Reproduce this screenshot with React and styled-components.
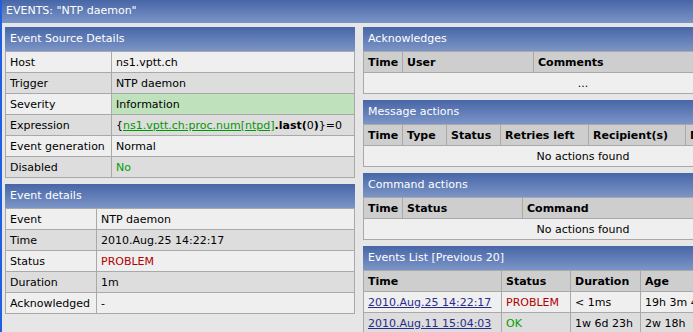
import React from "react";
import styled, { createGlobalStyle } from "styled-components";

const GlobalStyle = createGlobalStyle`
  html, body {
    margin: 0;
    padding: 0;
    overflow: hidden;
    background: #e6e6e6;
  }
  body {
    font-family: "DejaVu Sans", Verdana, sans-serif;
    font-size: 11px;
    color: #000;
  }
`;

const Page = styled.div`
  border-left: 2px solid #1f5fe0;
  min-height: 332px;
  width: 820px;
`;

const TopBar = styled.div`
  height: 23px;
  line-height: 22px;
  padding-left: 4px;
  color: #fff;
  background: linear-gradient(#4766a7, #7c95c7);
`;

const Columns = styled.div`
  display: flex;
  align-items: flex-start;
  gap: 8px;
  padding: 4px 0 0 3px;
`;

const Column = styled.div`
  display: flex;
  flex-direction: column;
  gap: 6px;
  width: ${(p) => p.$width}px;
  flex: none;
`;

const Panel = styled.div``;

const PanelTitle = styled.div`
  height: 24px;
  line-height: 23px;
  padding-left: 5px;
  color: #fff;
  background: linear-gradient(#4766a7, #7c95c7);
`;

const Table = styled.table`
  width: 100%;
  border-collapse: collapse;
  table-layout: fixed;
  border: 1px solid #a9a9a9;
  border-top: none;
`;

const Row = styled.tr`
  background: ${(p) => (p.$alt ? "#dddddd" : "#efefef")};
`;

const HeadRow = styled.tr`
  background: #cecece;
`;

const Th = styled.th`
  text-align: left;
  font-weight: bold;
  border: 1px solid #a9a9a9;
  height: 20px;
  padding: 0 4px;
  white-space: nowrap;
  overflow: hidden;
  ${(p) => p.$w && `width: ${p.$w}px;`}
`;

const Td = styled.td`
  border: 1px solid #a9a9a9;
  height: 20px;
  padding: 0 4px;
  white-space: nowrap;
  overflow: hidden;
  text-align: ${(p) => (p.$center ? "center" : "left")};
  ${(p) => p.$w && `width: ${p.$w}px;`}
  ${(p) => p.$bg && `background: ${p.$bg};`}
`;

const Green = styled.span`
  color: #00a000;
`;

const Red = styled.span`
  color: #b00000;
`;

const ExprLink = styled.a`
  color: #009900;
  text-decoration: underline;
`;

const DateLink = styled.a`
  color: #2a2a8a;
  text-decoration: underline;
`;

const sourceRows = [
  ["Host", "ns1.vptt.ch"],
  ["Trigger", "NTP daemon"],
  ["Severity", "Information", "#bfe2bd"],
  [
    "Expression",
    <>
      {"{"}
      <ExprLink>ns1.vptt.ch:proc.num[ntpd]</ExprLink>
      <b>.last(</b>0<b>)</b>
      {"}=0"}
    </>,
  ],
  ["Event generation", "Normal"],
  ["Disabled", <Green>No</Green>],
];

const detailRows = [
  ["Event", "NTP daemon"],
  ["Time", "2010.Aug.25 14:22:17"],
  ["Status", <Red>PROBLEM</Red>],
  ["Duration", "1m"],
  ["Acknowledged", "-"],
];

const KeyValueTable = ({ rows, labelWidth }) => (
  <Table>
    <tbody>
      {rows.map(([label, value, bg], i) => (
        <Row key={label} $alt={i % 2 === 1}>
          <Td $w={labelWidth}>{label}</Td>
          <Td $bg={bg}>{value}</Td>
        </Row>
      ))}
    </tbody>
  </Table>
);

const GridTable = ({ columns, children }) => (
  <Table>
    <thead>
      <HeadRow>
        {columns.map(([name, w]) => (
          <Th key={name} $w={w}>
            {name}
          </Th>
        ))}
      </HeadRow>
    </thead>
    <tbody>{children}</tbody>
  </Table>
);

const App = () => {
  return (
    <>
      <GlobalStyle />
      <Page>
        <TopBar>EVENTS: "NTP daemon"</TopBar>
        <Columns>
          <Column $width={350}>
            <Panel>
              <PanelTitle>Event Source Details</PanelTitle>
              <KeyValueTable rows={sourceRows} labelWidth={97} />
            </Panel>
            <Panel>
              <PanelTitle>Event details</PanelTitle>
              <KeyValueTable rows={detailRows} labelWidth={82} />
            </Panel>
          </Column>

          <Column $width={440}>
            <Panel>
              <PanelTitle>Acknowledges</PanelTitle>
              <GridTable columns={[["Time", 30], ["User", 122], ["Comments"]]}>
                <Row>
                  <Td colSpan={3} $center>
                    ...
                  </Td>
                </Row>
              </GridTable>
            </Panel>
            <Panel>
              <PanelTitle>Message actions</PanelTitle>
              <GridTable
                columns={[
                  ["Time", 30],
                  ["Type", 35],
                  ["Status", 45],
                  ["Retries left", 79],
                  ["Recipient(s)", 88],
                  ["Message"],
                ]}
              >
                <Row>
                  <Td colSpan={6} $center>
                    No actions found
                  </Td>
                </Row>
              </GridTable>
            </Panel>
            <Panel>
              <PanelTitle>Command actions</PanelTitle>
              <GridTable columns={[["Time", 30], ["Status", 111], ["Command"]]}>
                <Row>
                  <Td colSpan={3} $center>
                    No actions found
                  </Td>
                </Row>
              </GridTable>
            </Panel>
            <Panel>
              <PanelTitle>Events List [Previous 20]</PanelTitle>
              <GridTable
                columns={[
                  ["Time", 129],
                  ["Status", 60],
                  ["Duration", 61],
                  ["Age"],
                ]}
              >
                <Row>
                  <Td>
                    <DateLink>2010.Aug.25 14:22:17</DateLink>
                  </Td>
                  <Td>
                    <Red>PROBLEM</Red>
                  </Td>
                  <Td>&lt; 1ms</Td>
                  <Td>19h 3m 4s</Td>
                </Row>
                <Row $alt>
                  <Td>
                    <DateLink>2010.Aug.11 15:04:03</DateLink>
                  </Td>
                  <Td>
                    <Green>OK</Green>
                  </Td>
                  <Td>1w 6d 23h</Td>
                  <Td>2w 18h</Td>
                </Row>
              </GridTable>
            </Panel>
          </Column>
        </Columns>
      </Page>
    </>
  );
};

export default App;
